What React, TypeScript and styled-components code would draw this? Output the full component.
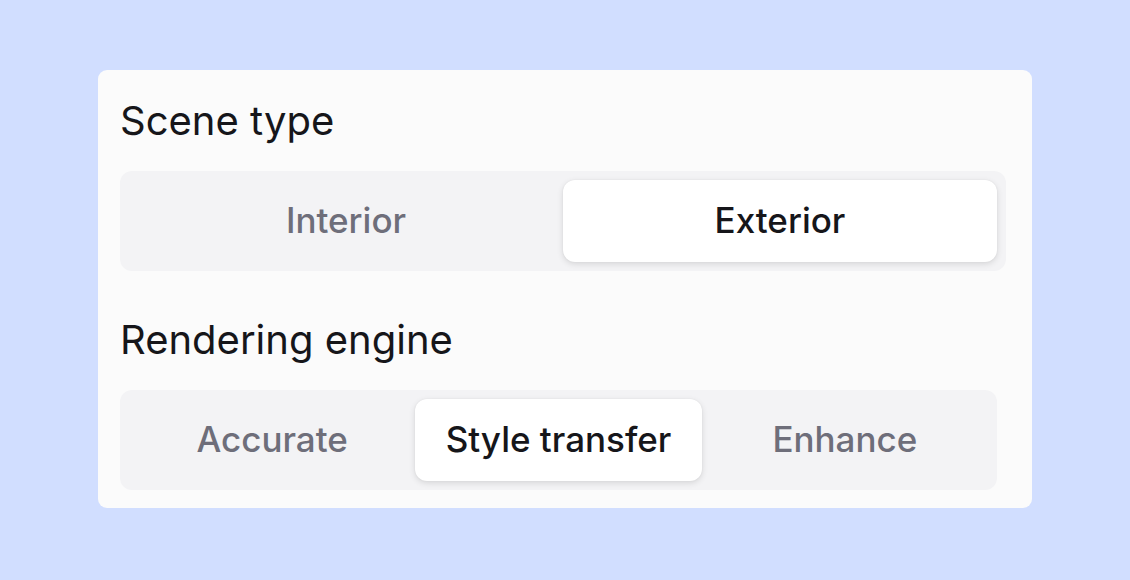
import React, { useState } from "react";
import styled, { createGlobalStyle } from "styled-components";

const Global = createGlobalStyle`
  html, body { margin: 0; padding: 0; }
  body {
    background: #d1deff;
    font-family: Inter, "Noto Sans", sans-serif;
    width: 1130px;
    height: 580px;
    overflow: hidden;
  }
`;

const Page = styled.div`
  padding: 70px 0 0 98px;
`;

const Card = styled.div`
  width: 934px;
  height: 438px;
  box-sizing: border-box;
  background: #fbfbfb;
  border-radius: 9px;
  padding: 22px 0 0 22px;
  display: flex;
  flex-direction: column;
`;

const Heading = styled.h2`
  margin: 0;
  font-size: 40px;
  font-weight: 400;
  line-height: 58px;
  color: #16161a;
  letter-spacing: 0;
`;

const Segmented = styled.div<{ $width: number; $cols: number }>`
  width: ${(p) => p.$width}px;
  box-sizing: border-box;
  background: #f3f3f5;
  border-radius: 12px;
  padding: 9px;
  display: grid;
  grid-template-columns: repeat(${(p) => p.$cols}, 1fr);
  margin-top: 21px;
  margin-bottom: 40px;
`;

const Option = styled.button<{ $active: boolean }>`
  height: 82px;
  padding: 0 0 3px;
  border: none;
  border-radius: 12px;
  font-family: Inter, "Noto Sans", sans-serif;
  font-size: 35px;
  font-weight: 500;
  cursor: pointer;
  background: ${(p) => (p.$active ? "#ffffff" : "transparent")};
  color: ${(p) => (p.$active ? "#16161a" : "#6e6e7a")};
  box-shadow: ${(p) =>
    p.$active ? "0 2px 6px rgba(0,0,0,0.12), 0 0 2px rgba(0,0,0,0.06)" : "none"};
`;

function Control({
  options,
  initial,
  width,
}: {
  options: string[];
  initial: number;
  width: number;
}) {
  const [sel, setSel] = useState(initial);
  return (
    <Segmented $width={width} $cols={options.length}>
      {options.map((o, i) => (
        <Option key={o} $active={i === sel} onClick={() => setSel(i)}>
          {o}
        </Option>
      ))}
    </Segmented>
  );
}

export default function App() {
  return (
    <>
      <Global />
      <Page>
        <Card>
          <Heading>Scene type</Heading>
          <Control options={["Interior", "Exterior"]} initial={1} width={886} />
          <Heading>Rendering engine</Heading>
          <Control options={["Accurate", "Style transfer", "Enhance"]} initial={1} width={877} />
        </Card>
      </Page>
    </>
  );
}
